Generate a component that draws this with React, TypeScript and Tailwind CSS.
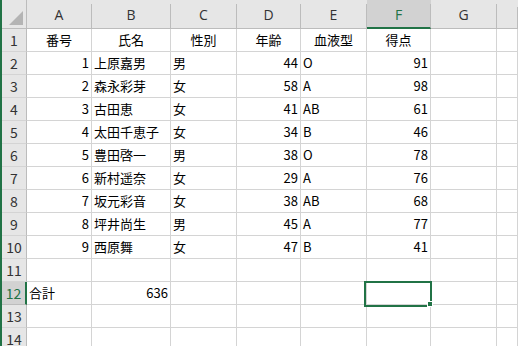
import React from "react";

const rows: (string | number)[][] = [
  [1, "上原嘉男", "男", 44, "O", 91],
  [2, "森永彩芽", "女", 58, "A", 98],
  [3, "古田恵", "女", 41, "AB", 61],
  [4, "太田千恵子", "女", 34, "B", 46],
  [5, "豊田啓一", "男", 38, "O", 78],
  [6, "新村遥奈", "女", 29, "A", 76],
  [7, "坂元彩音", "女", 38, "AB", 68],
  [8, "坪井尚生", "男", 45, "A", 77],
  [9, "西原舞", "女", 47, "B", 41],
];

const heads = ["番号", "氏名", "性別", "年齢", "血液型", "得点"];
const letters = ["A", "B", "C", "D", "E", "F", "G", ""];

const cell = "h-[23px] border-r border-b border-[#d4d4d4] flex items-center overflow-hidden whitespace-nowrap";
const rowHead = "h-[23px] bg-[#e6e6e6] border-r border-b border-r-[#bcbcbc] border-b-[#d4d4d4] flex items-center justify-center text-[14px] text-[#333]";

function Cell({ value, align }: { value?: string | number; align: "l" | "r" | "c" }) {
  const a = align === "r" ? "justify-end pr-[2px]" : align === "c" ? "justify-center" : "justify-start pl-[2px]";
  return <div className={`${cell} ${a}`}>{value}</div>;
}

export default function App() {
  const aligns: ("l" | "r")[] = ["r", "l", "l", "r", "l", "r"];
  return (
    <div
      className="w-[518px] h-[346px] overflow-hidden bg-white border-l-2 border-[#217346] text-[13px] text-black"
      style={{ fontFamily: '"Noto Sans CJK JP", "Liberation Sans", sans-serif' }}
    >
      <div className="grid grid-cols-[25px_65px_79px_66px_64px_66px_64px_66px_1fr]">
        {/* corner */}
        <div className="h-[29px] bg-[#e6e6e6] border-r border-b border-[#bcbcbc] relative">
          <svg width="25" height="28" className="block">
            <polygon points="21,11 21,25 7,25" fill="#b4b4b4" />
          </svg>
        </div>
        {letters.map((l, i) =>
          l === "F" ? (
            <div key={i} className="h-[29px] bg-[#d2d2d2] flex flex-col">
              <div className="h-[7px]" />
              <div className="flex-1 border-r border-[#bcbcbc] border-b-2 border-b-[#217346] flex items-center justify-center pb-[2px] text-[14px] text-[#217346]" style={{ fontFamily: '"Open Sans", sans-serif' }}>
                {l}
              </div>
            </div>
          ) : (
            <div key={i} className="h-[29px] bg-[#e6e6e6] border-b border-[#bcbcbc] flex flex-col">
              <div className="h-[7px]" />
              <div className="flex-1 border-r border-[#bcbcbc] flex items-center justify-center pb-[3px] text-[14px] text-[#333]" style={{ fontFamily: '"Open Sans", sans-serif' }}>
                {l}
              </div>
            </div>
          )
        )}

        {/* row 1 */}
        <div className={rowHead}>1</div>
        {heads.map((h) => (
          <Cell key={h} value={h} align="c" />
        ))}
        <Cell align="l" />
        <Cell align="l" />

        {rows.map((r, ri) => (
          <React.Fragment key={ri}>
            <div className={rowHead}>{ri + 2}</div>
            {r.map((v, ci) => (
              <Cell key={ci} value={v} align={aligns[ci]} />
            ))}
            <Cell align="l" />
            <Cell align="l" />
          </React.Fragment>
        ))}

        {/* row 11 */}
        <div className={rowHead}>11</div>
        {letters.map((_, i) => (
          <Cell key={i} align="l" />
        ))}

        {/* row 12 */}
        <div className="h-[23px] bg-[#d2d2d2] border-r-2 border-r-[#217346] border-b border-b-[#bcbcbc] flex items-center justify-center text-[14px] text-[#217346]">
          12
        </div>
        <Cell value="合計" align="l" />
        <Cell value={636} align="r" />
        <Cell align="l" />
        <Cell align="l" />
        <Cell align="l" />
        <div className={`${cell} relative overflow-visible`}>
          <div className="absolute -left-[3px] -top-[1px] -right-[2px] -bottom-[3px] border-2 border-[#217346]" />
          <div className="absolute -right-[3px] -bottom-[3px] w-[6px] h-[6px] bg-[#217346] border border-white" />
        </div>
        <Cell align="l" />
        <Cell align="l" />

        {[13, 14].map((n) => (
          <React.Fragment key={n}>
            <div className={rowHead}>{n}</div>
            {letters.map((_, i) => (
              <Cell key={i} align="l" />
            ))}
          </React.Fragment>
        ))}
      </div>
    </div>
  );
}
